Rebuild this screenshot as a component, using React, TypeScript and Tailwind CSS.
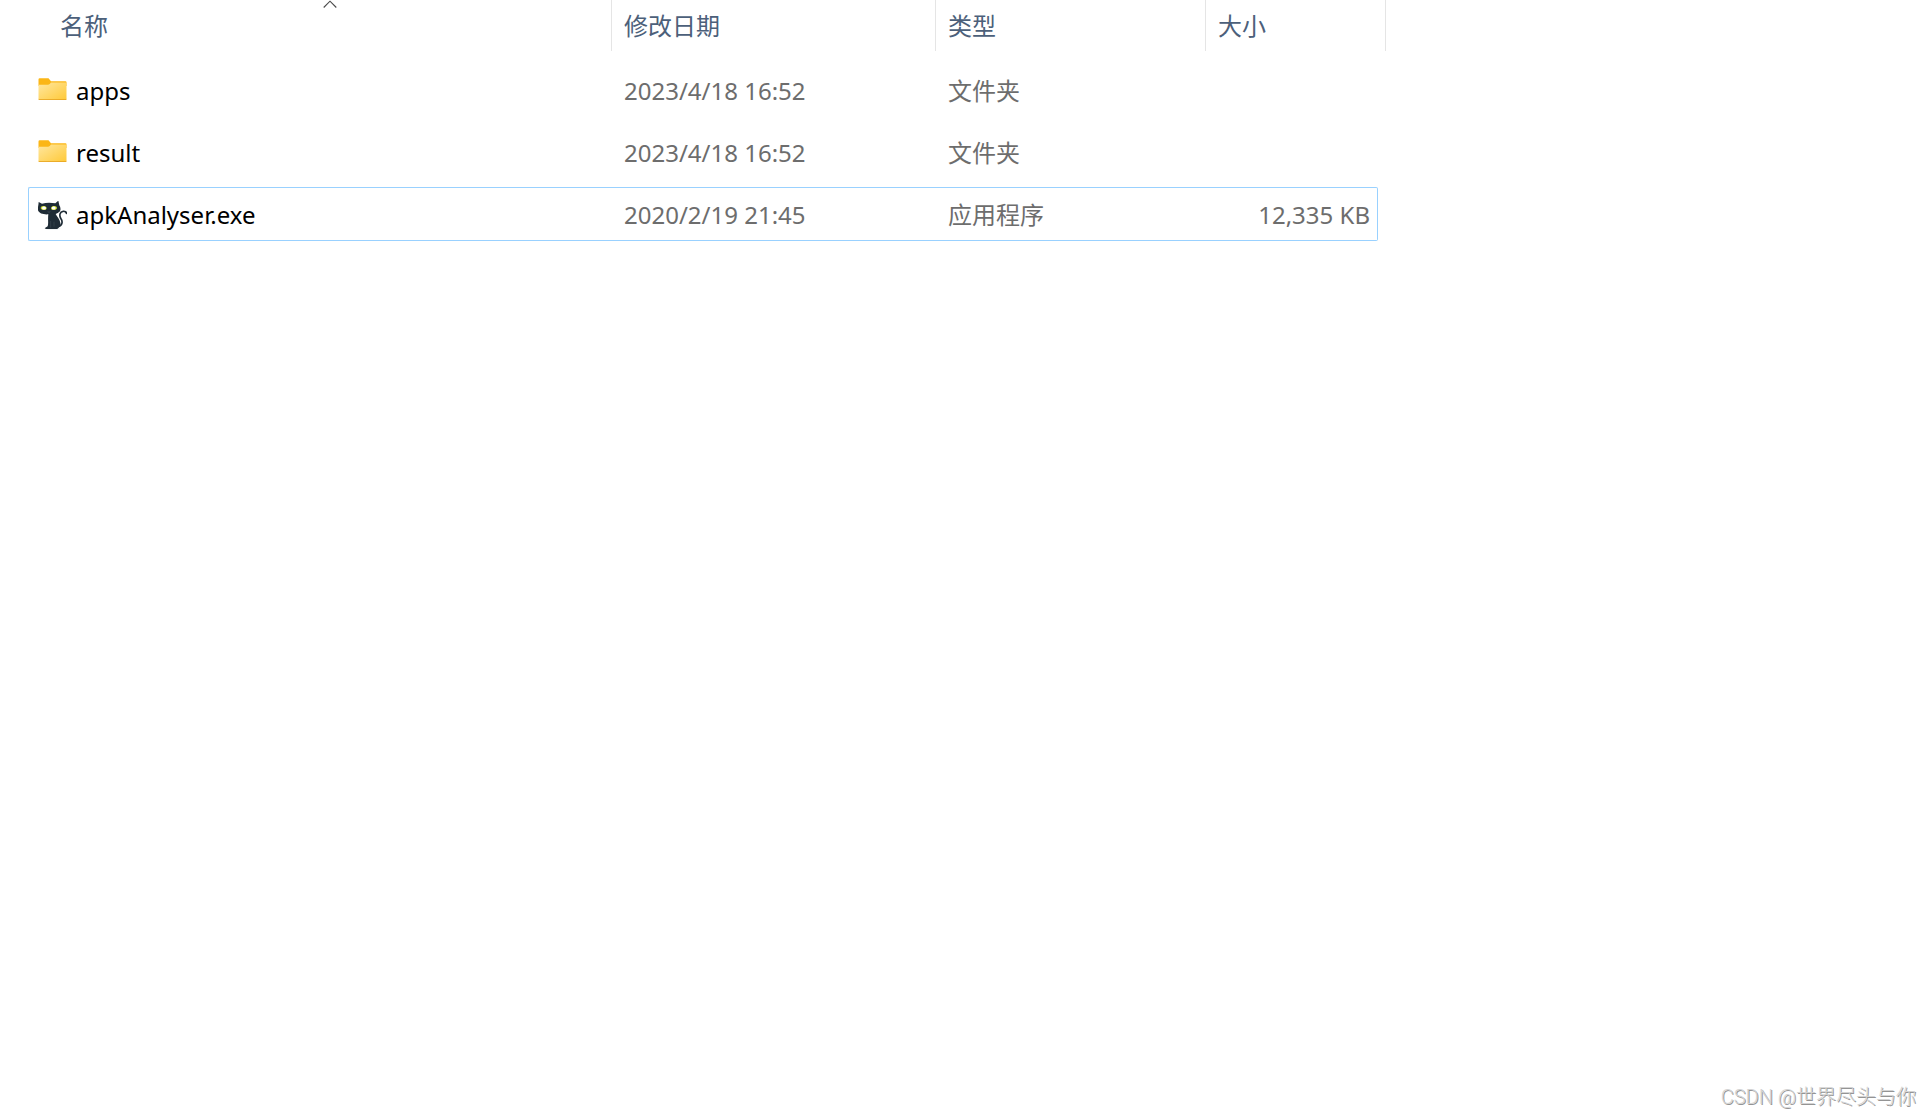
import type { ReactNode } from "react";

type FileRow = {
  name: string;
  date: string;
  type: string;
  size: string;
  icon: "folder" | "cat";
  focused?: boolean;
};

const rows: FileRow[] = [
  { name: "apps", date: "2023/4/18 16:52", type: "文件夹", size: "", icon: "folder" },
  { name: "result", date: "2023/4/18 16:52", type: "文件夹", size: "", icon: "folder" },
  { name: "apkAnalyser.exe", date: "2020/2/19 21:45", type: "应用程序", size: "12,335 KB", icon: "cat", focused: true },
];

function FolderIcon() {
  return (
    <svg viewBox="0 0 29 29" className="size-[29px] shrink-0" aria-hidden="true">
      <defs>
        <linearGradient id="folderFront" x1="0" y1="0" x2="1" y2="1">
          <stop offset="0" stopColor="#ffe7a0" />
          <stop offset="1" stopColor="#ffc937" />
        </linearGradient>
      </defs>
      <path d="M.5 2.5a1.2 1.2 0 0 1 1.200-1.200h8.800l2.500 3h14.500a1 1 0 0 1 1 1V9H.5z" fill="#fbb616" />
      <path d="M.5 7.800h9.500q1 0 1.700-.800l1.300-1.500h14.500a1 1 0 0 1 1 1V22a1 1 0 0 1-1 1h-26a1 1 0 0 1-1-1z" fill="url(#folderFront)" />
      <path d="M.5 21.800q0 1.200 1 1.200h26q1 0 1-1.200-.3.400-1 .400h-26q-.7 0-1-.400z" fill="#e5a01c" />
    </svg>
  );
}

function CatIcon() {
  return (
    <svg viewBox="23 28 87 87" className="size-[29px] shrink-0" aria-hidden="true">
      <path d="M40 111q20-4 52 0-24 4-52 0z" fill="#c3c9cc" />
      <path d="M84 105C98 100 97 88 91 80 86 70 89 60 98 59c6-1 10 2 10 6" fill="none" stroke="#1f2c36" strokeWidth="5" strokeLinecap="round" />
      <path
        d="M25 31l10 5q18-5 40-1l9-8 3 14c5 7 5 17-2 21-3 3-7 4-9 5 3 7 12 14 14 26 1 9-3 15-7 17l-2 2H46l-2-3 8-5c3-9 0-22 2-36-14 1-28-2-31-12-2-8 2-15 2-25z"
        fill="#1f2c36"
      />
      <path d="M61 88v20M71 90v15" stroke="#40505b" strokeWidth="1.500" fill="none" />
      <ellipse cx="40" cy="49" rx="9" ry="6" fill="#cbdc35" transform="rotate(10 40 49)" />
      <ellipse cx="71" cy="49" rx="9" ry="6" fill="#cbdc35" transform="rotate(-10 71 49)" />
      <ellipse cx="41" cy="49" rx="6" ry="4.500" fill="#fff" />
      <ellipse cx="70" cy="49" rx="6" ry="4.500" fill="#fff" />
      <path d="M52 60l4 2 4-2" stroke="#56636c" strokeWidth="1.500" fill="none" />
    </svg>
  );
}

function Header({ children, first }: { children: ReactNode; first?: boolean }) {
  return (
    <div className={first ? "pl-5" : ""}>
      <button
        type="button"
        className="relative flex h-[51px] w-full items-start border-r border-[#e5e5e5] pl-3 pt-2 text-left leading-9"
      >
        {children}
        {first && (
          <svg viewBox="0 0 14 8" className="absolute left-1/2 top-0 h-2 w-3.5 -translate-x-1/2" aria-hidden="true">
            <path d="M.7 7.500L7 1.200l6.300 6.300" fill="none" stroke="#4a4a4a" strokeWidth="1.100" />
          </svg>
        )}
      </button>
    </div>
  );
}

function Cell({ children, focused, className }: { children: ReactNode; focused?: boolean; className: string }) {
  return (
    <div className={`flex h-[54px] items-center border-y pt-0.5 ${focused ? "border-[#99d1ff]" : "border-transparent"} ${className}`}>
      {children}
    </div>
  );
}

export default function App() {
  return (
    <div className="flex min-h-screen flex-col justify-between bg-white font-['Noto_Sans','Noto_Sans_CJK_SC',sans-serif] text-2xl text-[#6d6d6d]">
      <main className="pl-7">
        <table className="w-full max-w-[1358px] table-fixed border-separate border-spacing-0">
          <colgroup>
            <col />
            <col className="w-[324px]" />
            <col className="w-[270px]" />
            <col className="w-[172px]" />
            <col className="w-2" />
          </colgroup>
          <thead className="text-[#4c607a]">
            <tr>
              <th scope="col" aria-sort="ascending" className="p-0 pb-1 font-normal"><Header first>名称</Header></th>
              <th scope="col" className="p-0 pb-1 font-normal"><Header>修改日期</Header></th>
              <th scope="col" className="p-0 pb-1 font-normal"><Header>类型</Header></th>
              <th scope="col" colSpan={2} className="p-0 pb-1 font-normal"><Header>大小</Header></th>
            </tr>
          </thead>
          <tbody>
            {rows.map((row) => (
              <tr key={row.name}>
                <td className="p-0 pt-2">
                  <Cell focused={row.focused} className="gap-[9px] rounded-l-xs border-l pl-[9px] text-black">
                    {row.icon === "folder" ? <FolderIcon /> : <CatIcon />}
                    {row.name}
                  </Cell>
                </td>
                <td className="p-0 pt-2"><Cell focused={row.focused} className="pl-3">{row.date}</Cell></td>
                <td className="p-0 pt-2"><Cell focused={row.focused} className="pl-3">{row.type}</Cell></td>
                <td className="p-0 pt-2">
                  <Cell focused={row.focused} className="justify-end rounded-r-xs border-r pr-[7px]">{row.size}</Cell>
                </td>
                <td className="p-0" />
              </tr>
            ))}
          </tbody>
        </table>
      </main>
      <footer className="self-end pb-1.5 pr-4 font-['Roboto','Noto_Sans_CJK_SC',sans-serif] text-xl font-light text-[#d4d4d4] [text-shadow:1px_1px_0_#949494]">
        CSDN @世界尽头与你
      </footer>
    </div>
  );
}
